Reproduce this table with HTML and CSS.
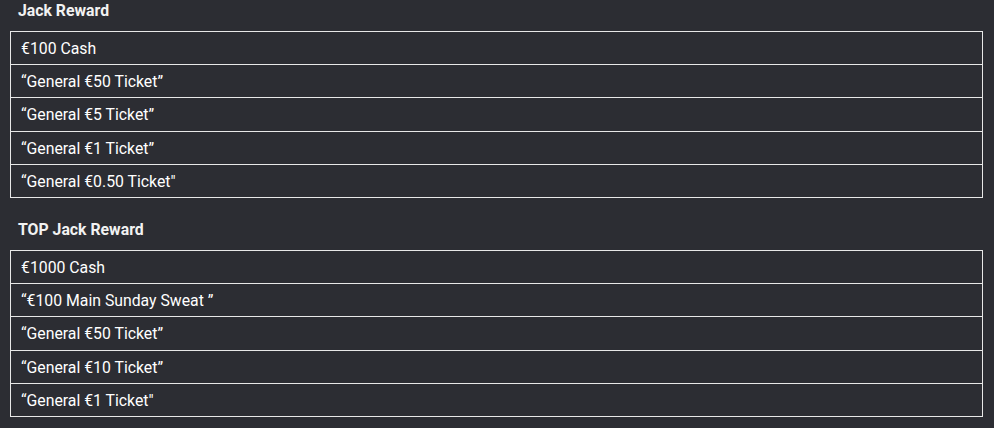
FILE: index.html
```html
<!DOCTYPE html>
<html>
<head>
<meta charset="utf-8">
<link rel="stylesheet" href="styles.css">
</head>
<body>
<div class="page">
  <h3 class="heading">Jack Reward</h3>
  <div class="list">
    <div class="row">€100 Cash</div>
    <div class="row">“General €50 Ticket”</div>
    <div class="row">“General €5 Ticket”</div>
    <div class="row">“General €1 Ticket”</div>
    <div class="row">“General €0.50 Ticket"</div>
  </div>
  <h3 class="heading heading-second">TOP Jack Reward</h3>
  <div class="list">
    <div class="row">€1000 Cash</div>
    <div class="row">“€100 Main Sunday Sweat ”</div>
    <div class="row">“General €50 Ticket”</div>
    <div class="row">“General €10 Ticket”</div>
    <div class="row">“General €1 Ticket"</div>
  </div>
</div>
</body>
</html>
```
FILE: styles.css
```css
html, body {
  margin: 0;
  padding: 0;
  background: #2c2d33;
}
.page {
  padding-left: 10px;
  width: 973px;
  font-family: Roboto, "Liberation Sans", sans-serif;
  color: #ffffff;
}
.heading {
  margin: 0;
  height: 31px;
  padding-left: 8px;
  font-size: 15.8px;
  font-weight: 700;
  line-height: 21px;
  color: #f2f2f2;
}
.heading-second {
  margin-top: 21px;
}
.list {
  border: 1px solid #e8e8e8;
  border-top: none;
}
.row {
  border-top: 1px solid #e8e8e8;
  height: 32.2px;
  line-height: 33px;
  padding-left: 10px;
  font-size: 15.8px;
}
```
